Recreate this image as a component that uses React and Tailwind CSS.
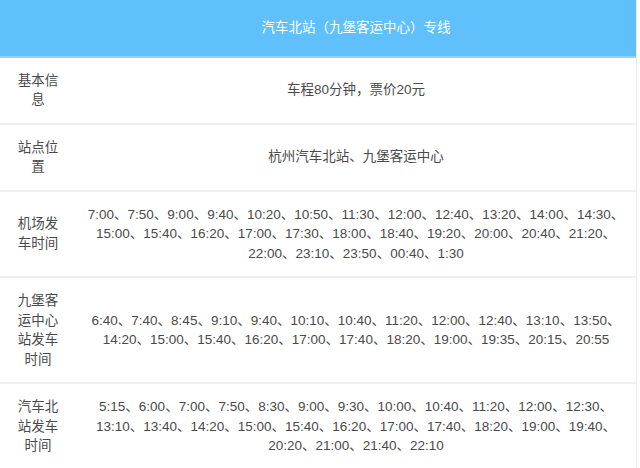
import React from 'react';

const rows = [
  { label: '基本信息', lines: ['车程80分钟，票价20元'] },
  { label: '站点位置', lines: ['杭州汽车北站、九堡客运中心'] },
  {
    label: '机场发车时间',
    lines: [
      '7:00、7:50、9:00、9:40、10:20、10:50、11:30、12:00、12:40、13:20、14:00、14:30、',
      '15:00、15:40、16:20、17:00、17:30、18:00、18:40、19:20、20:00、20:40、21:20、',
      '22:00、23:10、23:50、00:40、1:30',
    ],
  },
  {
    label: '九堡客运中心站发车时间',
    lines: [
      '6:40、7:40、8:45、9:10、9:40、10:10、10:40、11:20、12:00、12:40、13:10、13:50、',
      '14:20、15:00、15:40、16:20、17:00、17:40、18:20、19:00、19:35、20:15、20:55',
    ],
  },
  {
    label: '汽车北站发车时间',
    lines: [
      '5:15、6:00、7:00、7:50、8:30、9:00、9:30、10:00、10:40、11:20、12:00、12:30、',
      '13:10、13:40、14:20、15:00、15:40、16:20、17:00、17:40、18:20、19:00、19:40、',
      '20:20、21:00、21:40、22:10',
    ],
  },
];

export default function App() {
  return (
    <div
      className="w-[640px] h-[468px] bg-white overflow-hidden text-[13.5px] leading-[19.5px] text-[#4a4a4a]"
      style={{ fontFamily: '"Liberation Sans", "Noto Sans CJK SC", sans-serif' }}
    >
      <div className="w-[637px] border-r border-[#ececec]">
        {/* 표 머리 */}
        <div className="flex bg-[#5fc0fb] border-b-2 border-[#8fd3fc]">
          <div className="w-[76px] shrink-0"></div>
          <div className="flex-1 py-[18px] text-center text-white">汽车北站（九堡客运中心）专线</div>
        </div>

        {rows.map((row) => (
          <div key={row.label} className="flex items-center border-b-2 border-[#f0f0f0]">
            <div className="w-[76px] shrink-0 px-[17px] py-[13px] text-center">{row.label}</div>
            <div className="flex-1 px-2 py-[13px] text-center">
              {row.lines.map((line) => (
                <div key={line} className="whitespace-nowrap">{line}</div>
              ))}
            </div>
          </div>
        ))}
      </div>
    </div>
  );
}
